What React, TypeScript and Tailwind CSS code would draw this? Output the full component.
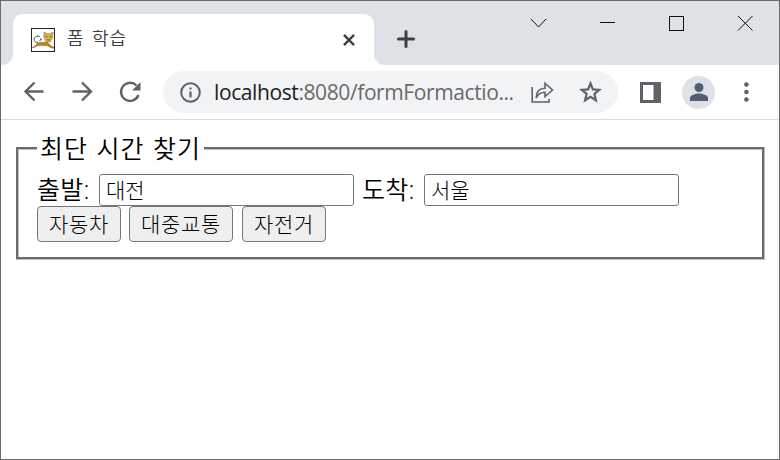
import React from "react";

function TomcatIcon() {
  return (
    <svg width="24" height="24" viewBox="0 0 24 24" className="shrink-0">
      <rect x=".5" y=".5" width="23" height="23" fill="#fff" stroke="#222" />
      <path d="M7 14.500C3 14.500 2 11 4.500 9c1.500-1.500 4-1 4.500 0M9 10.500l1.500 1-2 1M6.500 15.500l2.500 2" fill="none" stroke="#424844" strokeWidth="1" />
      <path d="M1 19.500c3.500-.5 4-4.500 8-5.200 3-.4 4 .4 7-.5 1.500 2 4 4.500 7 5.400l-.2 1c-3.300-.2-5.200-2-7-2.800-4.500.8-9-.8-11.500 1.600-1 .8-2 .8-3.300.5z" fill="#b98524" stroke="#886322" strokeWidth=".4" />
      <path d="M13 4l3 1.700h3L22 4l-.5 6-2.500 4h-3.500L13 10z" fill="#dfb14a" stroke="#8b7334" strokeWidth=".6" />
      <path d="M14.500 8l2 .8M20.500 8l-2 .8M16 11.500l1.500.7 1.700-.7" stroke="#555038" strokeWidth=".8" fill="none" />
    </svg>
  );
}

function Tab() {
  return (
    <div className="w-[361px] bg-[#dee1e6]">
      <div className="flex h-[51px] items-center rounded-t-[10px] bg-white pl-[18px] pr-[19px]">
        <TomcatIcon />
        <span className="-mt-[3px] ml-[12px] text-[18px] font-[350] leading-6 tracking-[1.100px] [word-spacing:1.500px] text-[#3c4043]">폼 학습</span>
        <svg width="12" height="12" viewBox="0 0 13 13" className="ml-auto" stroke="#3c4043" strokeWidth="2.500">
          <path d="M1 1l11 11M12 1L1 12" />
        </svg>
      </div>
    </div>
  );
}

function TabStrip() {
  return (
    <div className="h-[64px] shrink-0 bg-white">
      <div className="h-[13px] bg-[#dee1e6]" />
      <div className="flex h-[51px]">
        <div className="w-[12px] rounded-br-[11px] bg-[#dee1e6]" />
        <Tab />
        <div className="flex flex-1 items-start rounded-bl-[11px] bg-[#dee1e6] pl-[23px]">
          <svg width="18" height="18" viewBox="0 0 18 18" className="mt-[16px]" stroke="#3c4043" strokeWidth="3" strokeLinecap="round">
            <path d="M9 1.500v15M1.500 9h15" />
          </svg>
          <svg width="236" height="24" viewBox="0 0 236 24" className="-mt-[3px] ml-[107px]" fill="none" stroke="#111">
            <path d="M9 8l7.500 8L24 8" />
            <path d="M78 11.500h15" />
            <rect x="147.500" y="5.500" width="14" height="14" />
            <path d="M216 5l14.500 14.500M230.500 5L216 19.500" />
          </svg>
        </div>
      </div>
    </div>
  );
}

function AddressBar() {
  return (
    <div className="flex h-[42px] w-[455px] items-center rounded-full bg-[#f1f3f4] pl-[17px]">
      <svg width="21" height="21" viewBox="0 0 21 21" className="shrink-0" fill="none" stroke="#5f6368" strokeWidth="2">
        <circle cx="10.500" cy="10.500" r="9.300" />
        <path d="M10.500 9.500v6M10.500 5.500v2" strokeWidth="2.200" />
      </svg>
      <span className="ml-[13px] w-[302px] whitespace-nowrap text-[21px] leading-7 tracking-[-0.400px] text-[#686a6d]">
        <span className="text-[#202124]">localhost</span>:8080/formFormactio...
      </span>
      <svg width="24" height="24" viewBox="0 0 24 24" className="ml-[14px] shrink-0" fill="none" stroke="#5f6368" strokeWidth="1.600">
        <path d="M2.200 7v15H19v-3" />
        <path d="M6.200 18c0-6.500 3-9.700 8.800-9.700V3.200l7.500 6.800-7.500 6.500v-4.200c-4.800 0-7 1.600-8.800 5.700z" />
      </svg>
      <svg width="24" height="24" viewBox="0 0 24 24" className="ml-[24px] shrink-0" fill="none" stroke="#5f6368" strokeWidth="2.200">
        <path d="M12.500 3.500l2.400 5.900 6.300.5-4.800 4.100 1.500 6.300-5.400-3.400-5.400 3.400 1.500-6.300-4.800-4.100 6.300-.5z" />
      </svg>
    </div>
  );
}

function Toolbar() {
  return (
    <div className="flex h-[55px] shrink-0 items-center border-b border-[#dadce0] bg-white pl-[20px]">
      <svg width="26" height="26" viewBox="0 0 26 26" fill="none" stroke="#5f6368" strokeWidth="2.400">
        <path d="M22.500 12.500H5M13.500 3.500l-9 9 9 9" />
      </svg>
      <svg width="26" height="26" viewBox="0 0 26 26" className="ml-[22px]" fill="none" stroke="#5f6368" strokeWidth="2.400">
        <path d="M3.500 12.500h18M13 3.500l9 9-9 9" />
      </svg>
      <svg width="26" height="26" viewBox="0 0 26 26" className="ml-[22px]">
        <path d="M21.500 16a9 9 0 1 1-2-9.500" fill="none" stroke="#5f6368" strokeWidth="2.400" />
        <path d="M23.500 3v8.500H15z" fill="#5f6368" />
      </svg>
      <div className="ml-[20px]">
        <AddressBar />
      </div>
      <svg width="21" height="21" viewBox="0 0 21 21" className="ml-[22px]">
        <path d="M0 0h21v21H0z" fill="#5f6368" />
        <path d="M3 3h10.500v15H3z" fill="#fff" />
      </svg>
      <div className="ml-[21px] flex size-[33px] items-center justify-center rounded-full bg-[#dee1e6]">
        <svg width="20" height="20" viewBox="0 0 20 20" fill="#525d75">
          <circle cx="10" cy="5.500" r="4.500" />
          <path d="M1 19v-3c0-3 5.500-4.500 9-4.500s9 1.500 9 4.500v3z" />
        </svg>
      </div>
      <svg width="6" height="20" viewBox="0 0 6 20" className="ml-[28px]" fill="#5f6368">
        <circle cx="3.400" cy="2.500" r="2.300" />
        <circle cx="3.400" cy="10" r="2.300" />
        <circle cx="3.400" cy="17.500" r="2.300" />
      </svg>
    </div>
  );
}

function SearchForm() {
  return (
    <form className="mt-[27px] ml-[15px] h-[113px] w-[749px] border-r border-b border-[#bdbdbd] text-black" onSubmit={(e) => e.preventDefault()}>
      <div className="h-full border-2 border-[#6c6c6c]">
        <div className="h-full border-t border-l border-[#bdbdbd] pl-[18px]">
          <div className="-mt-[18px] h-[32px] w-[167px] whitespace-nowrap bg-white pl-[3px] text-[25px] font-[350] leading-[32px] tracking-[1px] [word-spacing:1px]">
            최단 시간 찾기
          </div>
          <div className="mt-[10px] flex h-[32px] items-center whitespace-nowrap text-[25px] font-[350] leading-[30px]">
            <label htmlFor="from" className="-mt-[3px] w-[62px] tracking-[0.300px]">출발:</label>
            <input id="from" defaultValue="대전" className="h-[32px] w-[255px] rounded-[3px] border border-[#767676] bg-white px-[6px] pb-[2px] text-[21px] font-light leading-7" />
            <label htmlFor="to" className="-mt-[3px] ml-[8px] w-[62px] tracking-[0.300px]">도착:</label>
            <input id="to" defaultValue="서울" className="h-[32px] w-[255px] rounded-[3px] border border-[#767676] bg-white px-[6px] pb-[2px] text-[21px] font-light leading-7" />
          </div>
          <div className="flex gap-[8px] text-[21px] font-light leading-7 tracking-[0.700px]">
            <button className="h-[36px] w-[84px] whitespace-nowrap rounded-[4px] border border-[#767676] bg-[#efefef]">자동차</button>
            <button className="h-[36px] w-[104px] whitespace-nowrap rounded-[4px] border border-[#767676] bg-[#efefef]">대중교통</button>
            <button className="ml-px h-[36px] w-[84px] whitespace-nowrap rounded-[4px] border border-[#767676] bg-[#efefef]">자전거</button>
          </div>
        </div>
      </div>
    </form>
  );
}

export default function App() {
  return (
    <div className="flex h-[460px] w-[780px] flex-col overflow-hidden border border-[#6b6b6b] bg-white font-['Open_Sans','Noto_Sans_CJK_KR',sans-serif]">
      <TabStrip />
      <Toolbar />
      <SearchForm />
    </div>
  );
}
